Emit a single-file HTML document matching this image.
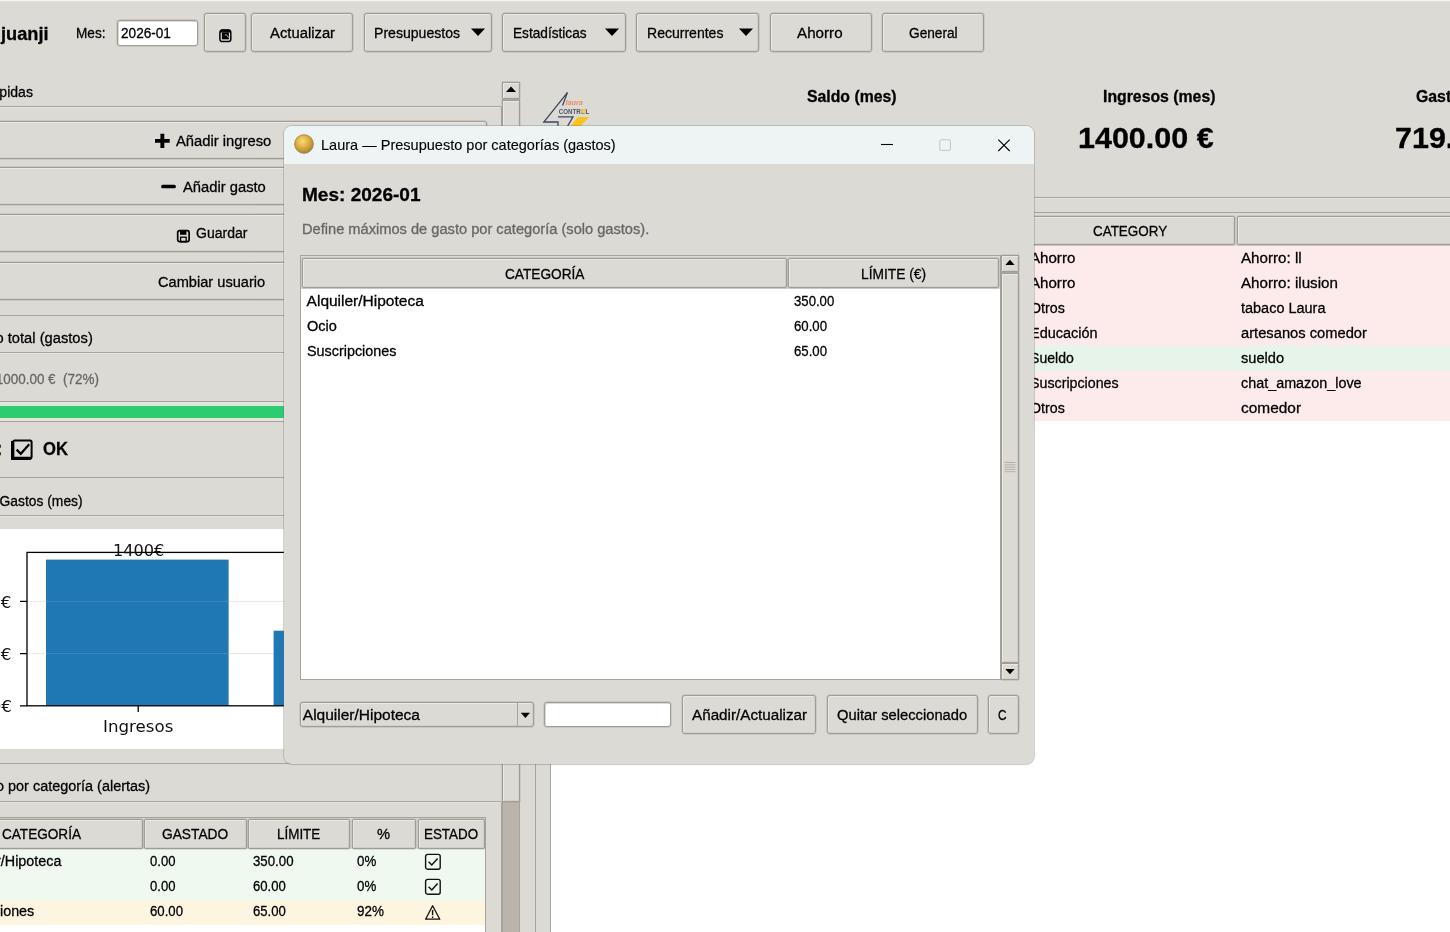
<!DOCTYPE html>
<html lang="es"><head><meta charset="utf-8"><title>Laura — Presupuesto por categorías (gastos)</title>
<style>
html,body{margin:0;padding:0;}
body{width:1450px;height:932px;overflow:hidden;background:#dcdad5;font-family:"Liberation Sans",sans-serif;}
#root{will-change:transform;position:relative;width:1450px;height:932px;overflow:hidden;}
#root div,#root span,#root svg{position:absolute;box-sizing:border-box;}
.t{-webkit-text-stroke:.3px currentColor;white-space:pre;line-height:1;transform-origin:0 0;color:#000;font-family:"Liberation Sans",sans-serif;}
.b{font-weight:bold;}
.dj{font-family:"DejaVu Sans",sans-serif;-webkit-text-stroke:0;}
.btn{border:1px solid #a19d94;border-radius:3px;background:#dcdad5;box-shadow:inset 1px 1px 0 #ebe9e5,inset -1px -1px 0 #d3d1cc,0 0 0 .7px rgba(158,154,145,.38);}
.hd{border:1px solid #a19d94;border-radius:2px;background:#dcdad5;box-shadow:inset 1px 1px 0 #ebe9e5,inset -1px -1px 0 #d0cec9,0 0 0 .7px rgba(158,154,145,.38);}
.ent{border:1px solid #a19d94;border-radius:3px;background:#fff;box-shadow:inset 1px 1px 0 #dcdad5,0 0 0 .7px rgba(158,154,145,.38);}
.hl{background:#a8a49b;height:1px;}
.vl{background:#a8a49b;width:1px;}
.lf{border:1px solid #a8a49b;border-radius:2px;box-shadow:inset 1px 1px 0 #e6e4df;}

</style></head><body>
<div id="root">
<div class="" style="left:0.00px;top:0.00px;width:1450.00px;height:1.00px;background:#f3f3f1;"></div>
<div class="" style="left:0.00px;top:1.00px;width:1450.00px;height:1.00px;background:#e4e3df;"></div>
<span class="t b" style="left:1.36px;top:24.00px;font-size:19px;transform:scaleX(0.9600);">juanji</span>
<span class="t" style="left:76.00px;top:24.75px;font-size:15.5px;transform:scaleX(0.8773);">Mes:</span>
<div class="ent" style="left:116.50px;top:20.40px;width:81.50px;height:25.40px;"></div>
<span class="t" style="left:120.60px;top:24.75px;font-size:15.5px;transform:scaleX(0.8774);">2026-01</span>
<div class="btn" style="left:203.70px;top:13.10px;width:42.30px;height:38.80px;"></div>
<svg style="left:218px;top:28px" width="15" height="16" viewBox="0 0 15 16"><rect x="1.9" y="2.1" width="10.9" height="11.5" rx="2.3" fill="none" stroke="#000" stroke-width="1.5"/><path d="M2 4.6V3.4Q2 1.5 4 1.5H10.8Q12.7 1.5 12.7 3.4V4.6z" fill="#000"/><path d="M3.9 4.4h7v6.9h-7z" fill="#000"/><path d="M6.8 7.1l1.5-.4 2.3 2.9" stroke="#cfcdc8" stroke-width=".9" fill="none"/></svg>
<div class="btn" style="left:251.40px;top:13.10px;width:102.00px;height:38.80px;"></div>
<span class="t" style="left:270.00px;top:24.75px;font-size:15.5px;transform:scaleX(0.9559);">Actualizar</span>
<div class="btn" style="left:364.00px;top:13.10px;width:127.60px;height:38.80px;"></div>
<span class="t" style="left:374.40px;top:24.75px;font-size:15.5px;transform:scaleX(0.9077);">Presupuestos</span>
<svg style="left:470px;top:27px" width="16" height="10" viewBox="0 0 16 10"><path d="M1 1.4h14l-7 7.6z" fill="#000"/></svg>
<div class="btn" style="left:502.40px;top:13.10px;width:123.20px;height:38.80px;"></div>
<span class="t" style="left:513.00px;top:24.75px;font-size:15.5px;transform:scaleX(0.8801);">Estadísticas</span>
<svg style="left:604px;top:27px" width="16" height="10" viewBox="0 0 16 10"><path d="M1 1.4h14l-7 7.6z" fill="#000"/></svg>
<div class="btn" style="left:636.40px;top:13.10px;width:123.00px;height:38.80px;"></div>
<span class="t" style="left:646.60px;top:24.75px;font-size:15.5px;transform:scaleX(0.9055);">Recurrentes</span>
<svg style="left:737.5px;top:27px" width="16" height="10" viewBox="0 0 16 10"><path d="M1 1.4h14l-7 7.6z" fill="#000"/></svg>
<div class="btn" style="left:770.00px;top:13.10px;width:101.60px;height:38.80px;"></div>
<span class="t" style="left:797.40px;top:24.75px;font-size:15.5px;transform:scaleX(0.9806);">Ahorro</span>
<div class="btn" style="left:882.40px;top:13.10px;width:102.00px;height:38.80px;"></div>
<span class="t" style="left:909.40px;top:24.75px;font-size:15.5px;transform:scaleX(0.8816);">General</span>
<span class="t" style="left:-73.96px;top:83.75px;font-size:15.5px;transform:scaleX(0.9057);">Acciones rápidas</span>
<div class="lf" style="left:-30.00px;top:106.00px;width:532.00px;height:209.50px;"></div>
<div class="btn" style="left:-70.00px;top:121.20px;width:556.60px;height:37.80px;"></div>
<div class="btn" style="left:-70.00px;top:167.20px;width:556.60px;height:38.20px;"></div>
<div class="btn" style="left:-70.00px;top:213.50px;width:556.60px;height:38.30px;"></div>
<div class="btn" style="left:-70.00px;top:262.20px;width:556.60px;height:38.20px;"></div>
<svg style="left:154px;top:133px" width="17" height="16" viewBox="0 0 17 16"><path d="M8.35 .7v14.3M1 7.85h14.7" stroke="#000" stroke-width="3.9" stroke-linejoin="round"/></svg>
<span class="t" style="left:176.20px;top:132.75px;font-size:15.5px;transform:scaleX(0.9530);">Añadir ingreso</span>
<svg style="left:160px;top:180px" width="17" height="12" viewBox="0 0 17 12"><path d="M2.9 6.5h11.2" stroke="#000" stroke-width="3.7" stroke-linecap="round"/></svg>
<span class="t" style="left:182.50px;top:178.75px;font-size:15.5px;transform:scaleX(0.9517);">Añadir gasto</span>
<svg style="left:176px;top:229px" width="15" height="14" viewBox="0 0 15 14"><rect x="1.7" y="1.6" width="11.4" height="11" rx="1.8" fill="none" stroke="#000" stroke-width="1.7"/><rect x="4" y="1.6" width="6.4" height="4.2" fill="#000"/><rect x="4.6" y="8.2" width="5.6" height="4.6" fill="none" stroke="#000" stroke-width="1.3"/></svg>
<span class="t" style="left:195.80px;top:224.75px;font-size:15.5px;transform:scaleX(0.9037);">Guardar</span>
<span class="t" style="left:158.20px;top:273.75px;font-size:15.5px;transform:scaleX(0.9424);">Cambiar usuario</span>
<span class="t" style="left:-79.03px;top:329.75px;font-size:15.5px;transform:scaleX(0.9495);">Presupuesto total (gastos)</span>
<div class="lf" style="left:-30.00px;top:352.00px;width:532.00px;height:125.80px;"></div>
<span class="t" style="left:-125.98px;top:370.75px;font-size:15.5px;color:#666;transform:scaleX(0.8671);">Gastado: 719.00 € / 1000.00 €  (72%)</span>
<div class="" style="left:-30.00px;top:401.00px;width:516.60px;height:21.00px;border:1px solid #a8a49b;background:#e6e4df;"></div>
<div class="" style="left:-30.00px;top:405.60px;width:430.00px;height:12.80px;background:#2ecc71;"></div>
<span class="t b" style="left:-61.81px;top:440.25px;font-size:18.5px;transform:scaleX(0.9500);">Estado:</span>
<svg style="left:10px;top:438px" width="25" height="23" viewBox="0 0 25 23"><rect x="3.2" y="2.6" width="18.4" height="17.6" rx="1.5" fill="none" stroke="#000" stroke-width="2"/><path d="M2.6 3v17.4h18.6" fill="none" stroke="#000" stroke-width="3.2"/><path d="M6.6 11.6l4.2 4.2 8.4-9.6" fill="none" stroke="#000" stroke-width="2.2"/></svg>
<span class="t b" style="left:42.50px;top:440.25px;font-size:18.5px;transform:scaleX(0.8973);">OK</span>
<span class="t" style="left:-74.58px;top:492.75px;font-size:15.5px;transform:scaleX(0.8925);">Ingresos vs Gastos (mes)</span>
<div class="lf" style="left:-30.00px;top:515.00px;width:532.00px;height:249.00px;"></div>
<div class="" style="left:-30.00px;top:529.00px;width:516.60px;height:220.30px;background:#fff;"></div>
<svg style="left:0;top:529px" width="487" height="221" viewBox="0 529 487 221" font-family="DejaVu Sans, sans-serif">
<line x1="27" y1="601.4" x2="487" y2="601.4" stroke="#e6e6e6" stroke-width="1"/>
<line x1="27" y1="653.6" x2="487" y2="653.6" stroke="#e6e6e6" stroke-width="1"/>
<rect x="46" y="559.6" width="182.6" height="146.2" fill="#1f77b4"/>
<rect x="273.6" y="630.7" width="182.6" height="75.1" fill="#1f77b4"/>
<line x1="27" y1="601.4" x2="228.6" y2="601.4" stroke="#ffffff" stroke-opacity=".12" stroke-width="1"/>
<line x1="27" y1="653.6" x2="228.6" y2="653.6" stroke="#ffffff" stroke-opacity=".12" stroke-width="1"/>
<rect x="27" y="552.4" width="470" height="153.4" fill="none" stroke="#000" stroke-width="1.3"/>
<path d="M20 601.4h7M20 653.6h7M20 705.8h7M138.2 705.8v6.2M365 705.8v6.2" stroke="#000" stroke-width="1.3"/>
</svg>
<span class="t dj" style="left:112.60px;top:543.16px;font-size:16.67px;color:#111;transform:scaleX(0.9695);">1400€</span>
<span class="t dj" style="left:103.00px;top:719.16px;font-size:16.67px;color:#111;">Ingresos</span>
<span class="t dj" style="left:-41.52px;top:595.16px;font-size:16.67px;color:#111;">1000€</span>
<span class="t dj" style="left:-30.99px;top:647.16px;font-size:16.67px;color:#111;">500€</span>
<span class="t dj" style="left:-9.38px;top:699.16px;font-size:16.67px;color:#111;">0€</span>
<span class="t" style="left:-77.05px;top:777.75px;font-size:15.5px;transform:scaleX(0.9311);">Presupuesto por categoría (alertas)</span>
<div class="lf" style="left:-30.00px;top:801.00px;width:532.00px;height:159.00px;"></div>
<div class="" style="left:-30.00px;top:817.00px;width:516.00px;height:143.00px;border:1px solid #a8a49b;background:#fff;"></div>
<div class="" style="left:-30.00px;top:849.00px;width:515.00px;height:25.00px;background:#eff9f0;"></div>
<div class="" style="left:-30.00px;top:874.00px;width:515.00px;height:25.50px;background:#eff9f0;"></div>
<div class="" style="left:-30.00px;top:899.50px;width:515.00px;height:25.00px;background:#fef5e1;"></div>
<div class="" style="left:-30.00px;top:818.00px;width:515.00px;height:31.00px;background:#dcdad5;"></div>
<div class="hd" style="left:-30.00px;top:818.60px;width:173.20px;height:30.00px;"></div>
<div class="hd" style="left:144.40px;top:818.60px;width:102.20px;height:30.00px;"></div>
<div class="hd" style="left:248.00px;top:818.60px;width:102.20px;height:30.00px;"></div>
<div class="hd" style="left:351.60px;top:818.60px;width:64.60px;height:30.00px;"></div>
<div class="hd" style="left:417.60px;top:818.60px;width:67.20px;height:30.00px;"></div>
<span class="t" style="left:2.00px;top:825.75px;font-size:15.5px;transform:scaleX(0.8766);">CATEGORÍA</span>
<span class="t" style="left:161.80px;top:825.75px;font-size:15.5px;transform:scaleX(0.8871);">GASTADO</span>
<span class="t" style="left:276.60px;top:825.75px;font-size:15.5px;transform:scaleX(0.8660);">LÍMITE</span>
<span class="t" style="left:377.00px;top:825.75px;font-size:15.5px;transform:scaleX(0.9455);">%</span>
<span class="t" style="left:423.90px;top:825.75px;font-size:15.5px;transform:scaleX(0.8639);">ESTADO</span>
<span class="t" style="left:-46.74px;top:852.75px;font-size:15.5px;transform:scaleX(0.9250);">Alquiler/Hipoteca</span>
<span class="t" style="left:149.60px;top:852.75px;font-size:15.5px;transform:scaleX(0.8432);">0.00</span>
<span class="t" style="left:253.00px;top:852.75px;font-size:15.5px;transform:scaleX(0.8549);">350.00</span>
<span class="t" style="left:356.80px;top:852.75px;font-size:15.5px;transform:scaleX(0.8581);">0%</span>
<span class="t" style="left:-34.48px;top:877.75px;font-size:15.5px;transform:scaleX(0.9250);">Ocio</span>
<span class="t" style="left:149.60px;top:877.75px;font-size:15.5px;transform:scaleX(0.8432);">0.00</span>
<span class="t" style="left:253.00px;top:877.75px;font-size:15.5px;transform:scaleX(0.8465);">60.00</span>
<span class="t" style="left:356.80px;top:877.75px;font-size:15.5px;transform:scaleX(0.8581);">0%</span>
<span class="t" style="left:-54.86px;top:902.75px;font-size:15.5px;transform:scaleX(0.9250);">Suscripciones</span>
<span class="t" style="left:149.60px;top:902.75px;font-size:15.5px;transform:scaleX(0.8516);">60.00</span>
<span class="t" style="left:253.00px;top:902.75px;font-size:15.5px;transform:scaleX(0.8465);">65.00</span>
<span class="t" style="left:356.80px;top:902.75px;font-size:15.5px;transform:scaleX(0.8677);">92%</span>
<svg style="left:424px;top:852.5px" width="18" height="18" viewBox="0 0 18 18"><rect x="1.6" y="1.4" width="14.6" height="14.8" rx="2" fill="none" stroke="#111" stroke-width="1.4"/><path d="M4.6 8.8l3.2 3.2 5.8-6.4" fill="none" stroke="#111" stroke-width="1.5"/></svg>
<svg style="left:424px;top:877.5px" width="18" height="18" viewBox="0 0 18 18"><rect x="1.6" y="1.4" width="14.6" height="14.8" rx="2" fill="none" stroke="#111" stroke-width="1.4"/><path d="M4.6 8.8l3.2 3.2 5.8-6.4" fill="none" stroke="#111" stroke-width="1.5"/></svg>
<svg style="left:424px;top:904px" width="18" height="17" viewBox="0 0 18 17"><path d="M8.6 1.8L1.6 15.2h14.2z" fill="none" stroke="#111" stroke-width="1.3" stroke-linejoin="round"/><path d="M8.6 6v5.2M8.6 12.6v1.4" stroke="#111" stroke-width="1.4"/></svg>
<div class="" style="left:502.40px;top:82.00px;width:17.40px;height:878.00px;background:#bab5ab;border:1px solid #a8a49b;"></div>
<div class="btn" style="left:502.40px;top:82.00px;width:17.40px;height:17.00px;border-radius:1px;"></div>
<svg style="left:505px;top:85.4px" width="12" height="8" viewBox="0 0 12 8"><path d="M1 7h10L6 1.4z" fill="#000"/></svg>
<div class="btn" style="left:502.40px;top:99.60px;width:17.40px;height:702.40px;border-radius:1px;"></div>
<div class="vl" style="left:535.00px;top:212.00px;width:1.00px;height:748.00px;"></div>
<div class="" style="left:550.00px;top:212.00px;width:910.00px;height:748.00px;background:#fff;border:1px solid #a8a49b;"></div>
<div class="hl" style="left:520.00px;top:197.00px;width:940.00px;height:1.00px;"></div>
<div class="" style="left:520.00px;top:198.00px;width:940.00px;height:1.00px;background:#e8e6e2;height:1px;"></div>
<svg style="left:538px;top:88px" width="60" height="44" viewBox="538 88 60 44">
<path d="M567.4 92.6L543.8 122H558v6" fill="none" stroke="#3d4660" stroke-width="1.3"/>
<path d="M567.4 92.6L562.6 105.6" fill="none" stroke="#3d4660" stroke-width="1.3"/>
<path d="M558 116.8h15l-7 12" fill="none" stroke="#3d4660" stroke-width="1.3"/>
<path d="M577.6 117h11.6l-9.6 10h-9.4z" fill="#f9c31c"/>
<text x="565.4" y="105.4" font-family="Liberation Sans, sans-serif" font-size="6.4" font-weight="bold" font-style="italic" fill="#f08a63" textLength="17.5" lengthAdjust="spacingAndGlyphs">laura</text>
<text x="558.8" y="113.7" font-family="Liberation Sans, sans-serif" font-size="6.6" font-weight="bold" fill="#4a526b" textLength="30.4" lengthAdjust="spacingAndGlyphs">CONTROL</text>
<circle cx="583.4" cy="111.3" r="2.3" fill="#f9cb45"/>
</svg>
<span class="t b" style="left:807.00px;top:88.50px;font-size:16px;transform:scaleX(0.9873);">Saldo (mes)</span>
<span class="t b" style="left:1102.80px;top:88.50px;font-size:16px;transform:scaleX(0.9879);">Ingresos (mes)</span>
<span class="t b" style="left:1078.20px;top:123.70px;font-size:28.6px;transform:scaleX(1.0663);">1400.00 €</span>
<span class="t b" style="left:1415.50px;top:88.50px;font-size:16px;transform:scaleX(0.9880);">Gastos (mes)</span>
<span class="t b" style="left:1394.80px;top:123.70px;font-size:28.6px;transform:scaleX(1.0660);">719.00 €</span>
<div class="" style="left:551.00px;top:213.00px;width:909.00px;height:33.00px;background:#dcdad5;"></div>
<div class="hd" style="left:551.00px;top:216.00px;width:684.20px;height:29.00px;"></div>
<div class="hd" style="left:1237.20px;top:216.00px;width:232.80px;height:29.00px;"></div>
<span class="t" style="left:1092.70px;top:222.75px;font-size:15.5px;transform:scaleX(0.8667);">CATEGORY</span>
<div class="" style="left:551.00px;top:246.00px;width:909.00px;height:25.00px;background:#fdeaea;"></div>
<span class="t" style="left:1030.20px;top:249.75px;font-size:15.5px;transform:scaleX(0.9742);">Ahorro</span>
<span class="t" style="left:1241.00px;top:249.75px;font-size:15.5px;transform:scaleX(0.9790);">Ahorro: ll</span>
<div class="" style="left:551.00px;top:271.00px;width:909.00px;height:25.00px;background:#fdeaea;"></div>
<span class="t" style="left:1030.20px;top:274.75px;font-size:15.5px;transform:scaleX(0.9742);">Ahorro</span>
<span class="t" style="left:1241.00px;top:274.75px;font-size:15.5px;transform:scaleX(0.9776);">Ahorro: ilusion</span>
<div class="" style="left:551.00px;top:296.00px;width:909.00px;height:25.00px;background:#fdeaea;"></div>
<span class="t" style="left:1030.20px;top:299.75px;font-size:15.5px;transform:scaleX(0.9188);">Otros</span>
<span class="t" style="left:1241.00px;top:299.75px;font-size:15.5px;transform:scaleX(0.9337);">tabaco Laura</span>
<div class="" style="left:551.00px;top:321.00px;width:909.00px;height:25.00px;background:#fdeaea;"></div>
<span class="t" style="left:1030.20px;top:324.75px;font-size:15.5px;transform:scaleX(0.9326);">Educación</span>
<span class="t" style="left:1241.00px;top:324.75px;font-size:15.5px;transform:scaleX(0.9492);">artesanos comedor</span>
<div class="" style="left:551.00px;top:346.00px;width:909.00px;height:25.00px;background:#e6f4ea;"></div>
<span class="t" style="left:1030.20px;top:349.75px;font-size:15.5px;transform:scaleX(0.9078);">Sueldo</span>
<span class="t" style="left:1241.00px;top:349.75px;font-size:15.5px;transform:scaleX(0.9425);">sueldo</span>
<div class="" style="left:551.00px;top:371.00px;width:909.00px;height:25.00px;background:#fdeaea;"></div>
<span class="t" style="left:1030.20px;top:374.75px;font-size:15.5px;transform:scaleX(0.9181);">Suscripciones</span>
<span class="t" style="left:1241.00px;top:374.75px;font-size:15.5px;transform:scaleX(0.9268);">chat_amazon_love</span>
<div class="" style="left:551.00px;top:396.00px;width:909.00px;height:25.00px;background:#fdeaea;"></div>
<span class="t" style="left:1030.20px;top:399.75px;font-size:15.5px;transform:scaleX(0.9188);">Otros</span>
<span class="t" style="left:1241.00px;top:399.75px;font-size:15.5px;transform:scaleX(0.9959);">comedor</span>
<div style="left:283.6px;top:126px;width:750.8px;height:638px;border-radius:8px;background:#dcdad5;overflow:hidden;box-shadow:0 0 0 1px rgba(110,108,102,.30),0 1px 2px rgba(0,0,0,.06);"><div style="left:0;top:0;width:751px;height:37.8px;background:#eef4f4;"></div></div>
<svg style="left:293px;top:133px" width="22" height="22" viewBox="0 0 22 22"><defs><radialGradient id="g1" cx=".42" cy=".36" r=".7"><stop offset="0" stop-color="#f7dc7a"/><stop offset=".45" stop-color="#e2b040"/><stop offset="1" stop-color="#9a7a3a"/></radialGradient></defs><circle cx="11" cy="11" r="9.6" fill="url(#g1)"/><circle cx="11" cy="11" r="9.3" fill="none" stroke="#a48a52" stroke-width=".9"/></svg>
<span class="t" style="left:320.60px;top:137.70px;font-size:14.6px;transform:scaleX(0.9951);-webkit-text-stroke:.12px #000;">Laura — Presupuesto por categorías (gastos)</span>
<svg style="left:878px;top:137px" width="136" height="17" viewBox="878 137 136 17"><path d="M881 144.5h12" stroke="#000" stroke-width="1.1"/><rect x="939.8" y="139.8" width="10.6" height="10.6" rx="1.4" fill="none" stroke="#bfc3c3" stroke-width="1"/><path d="M998.3 139.6l11.4 11.4M1009.7 139.6l-11.4 11.4" stroke="#000" stroke-width="1.1"/></svg>
<span class="t b" style="left:302.00px;top:186.00px;font-size:18px;transform:scaleX(1.0577);">Mes: 2026-01</span>
<span class="t" style="left:302.00px;top:220.90px;font-size:15.2px;color:#666;transform:scaleX(0.9634);">Define máximos de gasto por categoría (solo gastos).</span>
<div class="" style="left:300.00px;top:255.00px;width:700.60px;height:424.60px;border:1px solid #a8a49b;background:#fff;"></div>
<div class="" style="left:301.00px;top:256.00px;width:698.60px;height:33.00px;background:#dcdad5;"></div>
<div class="hd" style="left:301.60px;top:258.00px;width:485.00px;height:30.40px;"></div>
<div class="hd" style="left:788.40px;top:258.00px;width:210.60px;height:30.40px;"></div>
<span class="t" style="left:504.60px;top:265.75px;font-size:15.5px;transform:scaleX(0.8810);">CATEGORÍA</span>
<span class="t" style="left:860.50px;top:265.75px;font-size:15.5px;transform:scaleX(0.8874);">LÍMITE (€)</span>
<span class="t" style="left:306.60px;top:292.75px;font-size:15.5px;">Alquiler/Hipoteca</span>
<span class="t" style="left:793.60px;top:292.75px;font-size:15.5px;transform:scaleX(0.8485);">350.00</span>
<span class="t" style="left:306.60px;top:317.75px;font-size:15.5px;transform:scaleX(0.9380);">Ocio</span>
<span class="t" style="left:793.60px;top:317.75px;font-size:15.5px;transform:scaleX(0.8516);">60.00</span>
<span class="t" style="left:306.60px;top:342.75px;font-size:15.5px;transform:scaleX(0.9264);">Suscripciones</span>
<span class="t" style="left:793.60px;top:342.75px;font-size:15.5px;transform:scaleX(0.8516);">65.00</span>
<div class="" style="left:1001.40px;top:255.00px;width:17.20px;height:424.80px;background:#bab5ab;border:1px solid #a8a49b;"></div>
<div class="btn" style="left:1001.40px;top:255.00px;width:17.20px;height:17.00px;border-radius:1px;"></div>
<div class="btn" style="left:1001.40px;top:272.60px;width:17.20px;height:390.00px;border-radius:1px;"></div>
<div class="btn" style="left:1001.40px;top:663.00px;width:17.20px;height:16.80px;border-radius:1px;"></div>
<svg style="left:1004.8px;top:259.4px" width="10" height="7" viewBox="0 0 10 7"><path d="M.4 6h9.2L5 .8z" fill="#000"/></svg>
<svg style="left:1004.8px;top:667.6px" width="10" height="7" viewBox="0 0 10 7"><path d="M.4 1h9.2L5 6.2z" fill="#000"/></svg>
<svg style="left:1004px;top:461px" width="12" height="12" viewBox="0 0 12 12"><path d="M.5 1.5h11M.5 3.8h11M.5 6.1h11M.5 8.4h11M.5 10.7h11" stroke="#b4b0a7" stroke-width="1"/></svg>
<div class="btn" style="left:299.60px;top:701.60px;width:234.00px;height:25.80px;border-radius:3px;"></div>
<div class="vl" style="left:516.60px;top:702.60px;width:1.00px;height:23.80px;"></div>
<span class="t" style="left:302.80px;top:706.75px;font-size:15.5px;">Alquiler/Hipoteca</span>
<svg style="left:519.5px;top:712px" width="11" height="7" viewBox="0 0 11 7"><path d="M.8 .8h9.2L5.4 6z" fill="#000"/></svg>
<div class="ent" style="left:544.20px;top:701.60px;width:126.80px;height:25.80px;"></div>
<div class="btn" style="left:682.00px;top:695.00px;width:134.20px;height:38.80px;"></div>
<span class="t" style="left:691.50px;top:706.75px;font-size:15.5px;transform:scaleX(0.9827);">Añadir/Actualizar</span>
<div class="btn" style="left:826.80px;top:695.00px;width:151.20px;height:38.80px;"></div>
<span class="t" style="left:837.00px;top:706.75px;font-size:15.5px;transform:scaleX(0.9504);">Quitar seleccionado</span>
<div class="btn" style="left:988.00px;top:695.00px;width:30.60px;height:38.80px;"></div>
<span class="t" style="left:998.40px;top:706.75px;font-size:15.5px;transform:scaleX(0.7644);">C</span>
</div>
</body></html>
